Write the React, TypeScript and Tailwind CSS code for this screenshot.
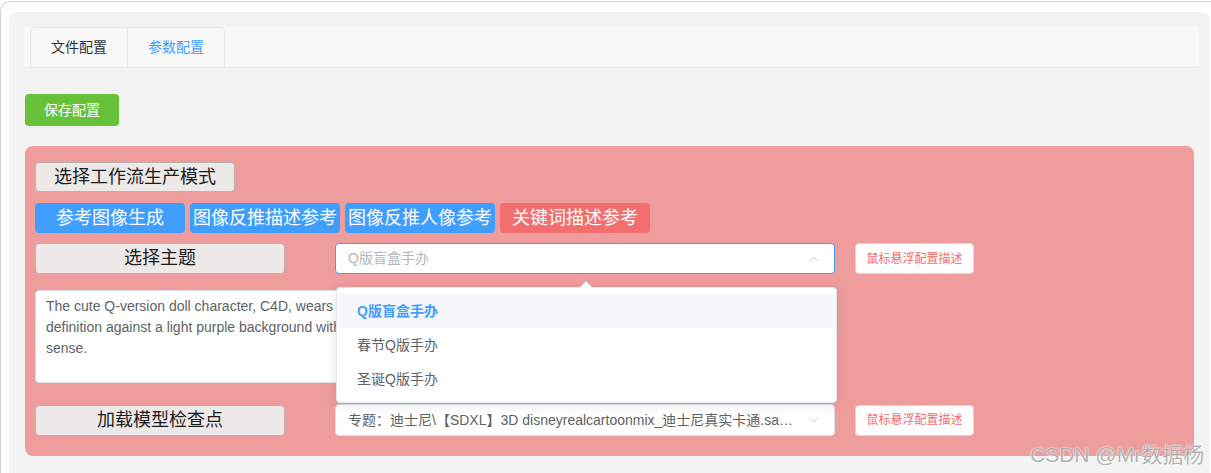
import React from 'react';
import { ChevronDown, ChevronUp } from 'lucide-react';

const TAGS: { label: string; cls: string }[] = [
  { label: '参考图像生成', cls: 'bg-[#409eff]' },
  { label: '图像反推描述参考', cls: 'bg-[#409eff]' },
  { label: '图像反推人像参考', cls: 'bg-[#409eff]' },
  { label: '关键词描述参考', cls: 'bg-[#f36f6f]' },
];

const OPTIONS = ['Q版盲盒手办', '春节Q版手办', '圣诞Q版手办'];

const PROMPT =
  'The cute Q-version doll character, C4D, wears a pink hoodie and big round glasses, smiling, clean lines, soft light, high\n' +
  'definition against a light purple background with a simple composition, blind box style, with a strong three-dimensional\n' +
  'sense.';

function GrayButton({ children, w, h }: { children: React.ReactNode; w: string; h: string }) {
  return (
    <button className={`${w} ${h} shrink-0 rounded-[4px] border border-[#bab2ae] bg-[#ede9e8] text-[18px] text-[#1c1c1c]`}>
      {children}
    </button>
  );
}

function HoverButton() {
  return (
    <button className="ml-5 h-[31px] w-[119px] shrink-0 rounded-[4px] border border-[#f9cccc] bg-white text-[12px] text-[#f56c6c]">
      鼠标悬浮配置描述
    </button>
  );
}

export default function App() {
  return (
    <div className='relative h-[473px] overflow-hidden bg-white pt-px font-["Liberation_Sans","Noto_Sans_CJK_SC",sans-serif]'>
      <div className="h-full rounded-tl-[10px] border-l border-t border-[#d4d4d4] pl-2 pt-[10px]">
        <div className="mr-px h-full rounded-t-[8px] bg-[#f3f3f3] pl-[15px] pr-[11px] pt-[15px]">
          {/* tabs */}
          <div className="flex h-[41px] border-b border-[#e4e7ed] bg-[#f8f8f8] pl-[6px]">
            <div className="flex h-[40px] rounded-t-[4px] border-x border-t border-[#e4e7ed]">
              <div className="px-5 text-[14px] leading-[39px] text-[#303133]">文件配置</div>
              <div className="border-l border-[#e4e7ed] px-5 text-[14px] leading-[39px] text-[#409eff]">参数配置</div>
            </div>
          </div>

          <button className="ml-px mt-[26px] h-8 w-[94px] rounded-[4px] bg-[#67c23a] text-[14px] text-white">保存配置</button>

          {/* config panel */}
          <div className="ml-px mt-5 h-[310px] w-[1169px] rounded-[8px] bg-[#ee9c9c] pl-[10px] pt-4">
            <GrayButton w="w-[200px]" h="h-[30px]">选择工作流生产模式</GrayButton>

            <div className="mt-[11px] flex gap-[5px]">
              {TAGS.map(t => (
                <button key={t.label} className={`h-[30px] w-[150px] rounded-[4px] text-[18px] text-white ${t.cls}`}>
                  {t.label}
                </button>
              ))}
            </div>

            <div className="mt-[10px] flex items-center">
              <GrayButton w="w-[250px]" h="h-[31px]">选择主题</GrayButton>
              <div className="relative ml-[50px] flex h-[31px] w-[500px] items-center justify-between rounded-[4px] border border-[#409eff] bg-white pl-3 pr-[12px]">
                <span className="text-[14px] text-[#b3b6bc]">Q版盲盒手办</span>
                <ChevronUp size={16} strokeWidth={1.25} className="text-[#c0c4cc]" />

                {/* dropdown */}
                <div className="absolute left-0 top-[43px] z-10 w-[501px] rounded-[4px] border border-[#e4e7ed] bg-white py-[6px] shadow-[0_2px_12px_0_rgba(0,0,0,0.1)]">
                  <div className="absolute -top-[7px] left-[242px] h-0 w-0 border-x-[7px] border-b-[7px] border-x-transparent border-b-[#e4e7ed]" />
                  <div className="absolute -top-[6px] left-[243px] h-0 w-0 border-x-[6px] border-b-[6px] border-x-transparent border-b-white" />
                  {OPTIONS.map((o, i) => (
                    <div
                      key={o}
                      className={
                        i === 0
                          ? 'h-[34px] bg-[#f5f7fa] px-5 text-[14px] font-bold leading-[34px] text-[#409eff]'
                          : 'h-[34px] px-5 text-[14px] leading-[34px] text-[#606266]'
                      }
                    >
                      {o}
                    </div>
                  ))}
                </div>
              </div>
              <HoverButton />
            </div>

            <textarea
              readOnly
              value={PROMPT}
              className="mt-4 block h-[93px] w-[800px] resize-none overflow-hidden whitespace-pre rounded-[4px] border border-[#dcdfe6] bg-white px-[10px] pt-[5px] text-[14px] leading-[21px] text-[#606266] outline-none"
            />

            <div className="mt-[21px] flex items-center">
              <GrayButton w="w-[250px]" h="h-[31px]">加载模型检查点</GrayButton>
              <div className="ml-[50px] flex h-[32px] w-[500px] items-center justify-between rounded-[4px] border border-[#dcdfe6] bg-white pl-3 pr-[12px]">
                <span className="truncate pr-3 text-[14px] text-[#606266]">
                  专题：迪士尼\【SDXL】3D disneyrealcartoonmix_迪士尼真实卡通.safetensors
                </span>
                <ChevronDown size={16} strokeWidth={1.25} className="shrink-0 text-[#c0c4cc]" />
              </div>
              <HoverButton />
            </div>
          </div>
        </div>
      </div>

      {/* watermark */}
      <div className="pointer-events-none absolute left-[1030px] top-[439px] text-[21px] text-[rgba(110,110,110,0.55)] [text-shadow:0_0_2px_#fff,0_0_1px_#fff]">
        CSDN @Mr数据杨
      </div>
    </div>
  );
}
